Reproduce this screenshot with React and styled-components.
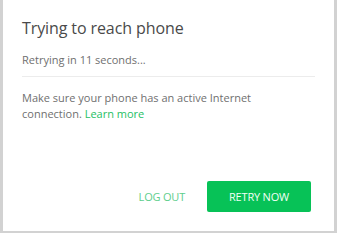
import React from "react";
import styled, { createGlobalStyle } from "styled-components";

const Global = createGlobalStyle`
  html, body { margin: 0; padding: 0; background: #d2d2d2; }
  body { width: 337px; height: 233px; overflow: hidden; font-family: "Open Sans", "Noto Sans", sans-serif; }
  #root { height: 100%; }
`;

const Card = styled.div`
  box-sizing: border-box;
  margin: 0 3px 0 3px;
  height: 231px;
  background: #fff;
  padding: 18px 19px 0 19px;
  display: flex;
  flex-direction: column;
`;

const Title = styled.h1`
  margin: 0;
  font-size: 16px;
  line-height: 20px;
  font-weight: 400;
  color: #4a4a4a;
  letter-spacing: -0.1px;
`;

const Status = styled.p`
  margin: 14px 0 0 0;
  font-size: 11px;
  line-height: 16px;
  color: #6f6f6f;
  padding-bottom: 8px;
  border-bottom: 1px solid #ececec;
`;

const Body = styled.p`
  margin: 13px 0 0 0;
  font-size: 11px;
  line-height: 16px;
  color: #6f6f6f;
`;

const Link = styled.a`
  color: #25c064;
  text-decoration: none;
`;

const Actions = styled.div`
  margin-top: auto;
  margin-bottom: 19px;
  display: flex;
  justify-content: flex-end;
  align-items: center;
  gap: 22px;
  padding-right: 4px;
`;

const Button = styled.button`
  font-family: inherit;
  font-size: 11px;
  letter-spacing: -0.2px;
  border: none;
  border-radius: 2px;
  height: 31px;
  cursor: pointer;
  padding: 0 ${(p) => (p.$primary ? "20px" : "0")};
  width: ${(p) => (p.$primary ? "104px" : "auto")};
  background: ${(p) => (p.$primary ? "#07c257" : "transparent")};
  color: ${(p) => (p.$primary ? "#f2fff6" : "#5dce8c")};
`;

export default function App() {
  return (
    <>
      <Global />
      <Card>
        <Title>Trying to reach phone</Title>
        <Status>Retrying in 11 seconds...</Status>
        <Body>
          Make sure your phone has an active Internet
          <br />
          connection. <Link href="#">Learn more</Link>
        </Body>
        <Actions>
          <Button>LOG OUT</Button>
          <Button $primary>RETRY NOW</Button>
        </Actions>
      </Card>
    </>
  );
}
